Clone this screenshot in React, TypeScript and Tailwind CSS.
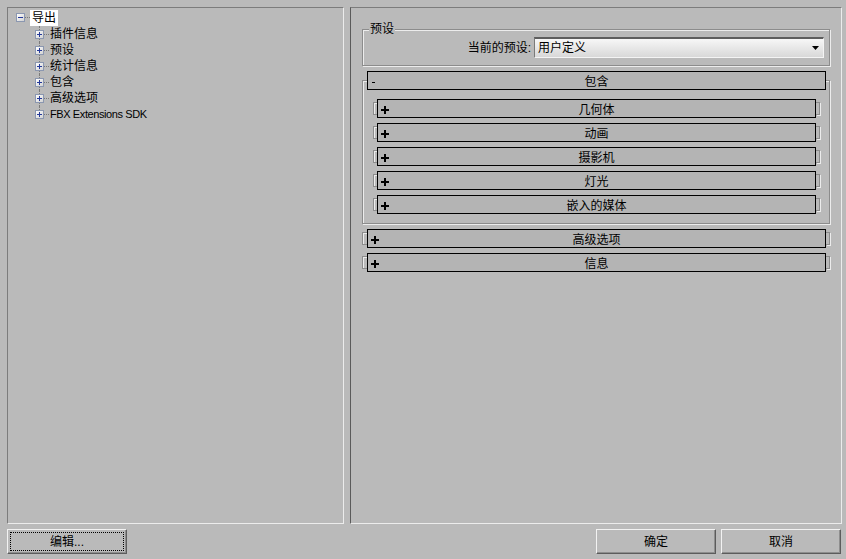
import React from 'react'

const etched = 'border border-[#8c8c8c] shadow-[inset_1px_1px_0_#ececec,1px_1px_0_#ececec]'

function TreeBox({ open }: { open?: boolean }) {
  return (
    <div className="relative z-10 w-[9px] h-[9px] border border-[#8b97b0] bg-linear-to-br from-white to-[#d2d2d2] flex items-center justify-center">
      <svg width="5" height="5" viewBox="0 0 5 5" shapeRendering="crispEdges">
        <path d="M0 2.5H5" stroke="#23389a" strokeWidth="1" />
        {!open && <path d="M2.5 0V5" stroke="#23389a" strokeWidth="1" />}
      </svg>
    </div>
  )
}

const children = ['插件信息', '预设', '统计信息', '包含', '高级选项', 'FBX Extensions SDK']

function Plus() {
  return (
    <svg width="8" height="8" viewBox="0 0 8 8" shapeRendering="crispEdges">
      <rect x="3" y="0" width="2" height="8" fill="#000" />
      <rect x="0" y="3" width="8" height="2" fill="#000" />
    </svg>
  )
}

function Minus() {
  return (
    <svg width="4" height="8" viewBox="0 0 4 8" shapeRendering="crispEdges">
      <rect x="0" y="4" width="3" height="1" fill="#000" />
    </svg>
  )
}

function Bracket({ side, w = 4 }: { side: 'l' | 'r'; w?: number }) {
  return side === 'l' ? (
    <div
      className={`${w === 5 ? 'w-[5px]' : 'w-[4px]'} h-[13px] border border-r-0 border-[#8c8c8c] shadow-[inset_1px_1px_0_#ececec]`}
    />
  ) : (
    <div className="w-[4px] h-[13px] border border-l-0 border-[#8c8c8c] shadow-[1px_1px_0_#ececec]" />
  )
}

function Header({ title, open }: { title: string; open?: boolean }) {
  return (
    <div className="flex-1 h-[19px] border border-black bg-[#b4b4b4] grid grid-cols-[20px_1fr_20px] items-center">
      <div className={`flex items-center ${open ? 'pl-[4px]' : 'pl-[3px]'}`}>{open ? <Minus /> : <Plus />}</div>
      <div className="text-center text-[12px] leading-[17px] pt-[2px]">{title}</div>
      <div />
    </div>
  )
}

function Button({ label, focus }: { label: string; focus?: boolean }) {
  return (
    <div className="w-[120px] h-[25px] border border-t-[#f2f2f2] border-l-[#f2f2f2] border-b-[#5c5c5c] border-r-[#5c5c5c] shadow-[inset_-1px_-1px_0_#8e8e8e] p-[2px]">
      <div
        className={`h-full flex items-center justify-center text-[12px] ${focus ? 'border border-dotted border-black' : 'border border-transparent'}`}
      >
        {label}
      </div>
    </div>
  )
}

export default function App() {
  return (
    <div className="w-[846px] h-[559px] bg-[#bababa] flex flex-col pl-[7px] pr-[4px] pt-[7px] overflow-hidden text-black font-['Liberation_Sans','Noto_Sans_CJK_SC',sans-serif]">
      <div className="flex gap-[6px] h-[517px]">
        {/* tree */}
        <div className="w-[337px] border border-t-[#7c7c7c] border-l-[#7c7c7c] border-b-[#ececec] border-r-[#ececec] pt-[1px]">
          <div className="flex items-center h-[17px] pl-[8px]">
            <TreeBox open />
            <div className="w-[5px] border-t border-dotted border-[#7a7a7a]" />
            <span className="bg-white px-[2px] text-[12px] leading-[16px]">导出</span>
          </div>
          {children.map((c, i) => (
            <div key={c} className="flex items-center h-4 pl-[27px]">
              <div className="relative w-[9px] h-4 flex items-center">
                <span
                  className={`absolute left-[4px] top-0 border-l border-dotted border-[#7a7a7a] ${i === children.length - 1 ? 'h-2' : 'h-4'}`}
                />
                <TreeBox />
              </div>
              <div className="w-[5px] border-t border-dotted border-[#7a7a7a]" />
              <span
                className={`pl-[1px] leading-[16px] ${i === children.length - 1 ? 'text-[11px] tracking-[-0.4px]' : 'text-[12px]'}`}
              >
                {c}
              </span>
            </div>
          ))}
        </div>

        {/* settings */}
        <div className="w-[492px] border border-t-[#7c7c7c] border-l-[#5a5a5a] border-b-[#ececec] border-r-[#ececec] px-[11px] pt-[21px]">
          <div className={`relative ${etched} pt-[7px] pb-[7px] pr-[5px]`}>
            <span className="absolute left-[6px] -top-[8px] bg-[#bababa] px-[1px] text-[12px] leading-[14px]">预设</span>
            <div className="flex items-center justify-end gap-[3px]">
              <span className="text-[12px]">当前的预设:</span>
              <div className="w-[290px] h-[21px] border-t-2 border-l border-t-[#5e5e5e] border-l-[#7a7a7a] border-r border-b border-r-[#f4f4f4] border-b-[#f4f4f4] bg-linear-to-b from-[#f7f7f7] to-[#d8d8d8] flex items-center justify-between pl-[3px] pr-[4px]">
                <span className="text-[12px] leading-[16px]">用户定义</span>
                <svg width="7" height="4" viewBox="0 0 7 4">
                  <path d="M0 0H7L3.5 4Z" fill="#000" />
                </svg>
              </div>
            </div>
          </div>

          <div className="mt-[5px] flex ml-[5px] mr-[4px] relative z-10">
            <Header title="包含" open />
          </div>
          <div className={`-mt-[10px] ${etched} pt-[18px] pb-[9px] pl-[10px] pr-[9px] flex flex-col gap-[5px]`}>
            {['几何体', '动画', '摄影机', '灯光', '嵌入的媒体'].map((t) => (
              <div key={t} className="flex items-center">
                <Bracket side="l" />
                <Header title={t} />
                <Bracket side="r" />
              </div>
            ))}
          </div>

          <div className="mt-[5px] flex flex-col gap-[5px]">
            {['高级选项', '信息'].map((t) => (
              <div key={t} className="flex items-center">
                <Bracket side="l" w={5} />
                <Header title={t} />
                <Bracket side="r" />
              </div>
            ))}
          </div>
        </div>
      </div>

      <div className="mt-[5px] flex items-start justify-between pr-[1px]">
        <Button label="编辑..." focus />
        <div className="flex gap-[5px]">
          <Button label="确定" />
          <Button label="取消" />
        </div>
      </div>
    </div>
  )
}
